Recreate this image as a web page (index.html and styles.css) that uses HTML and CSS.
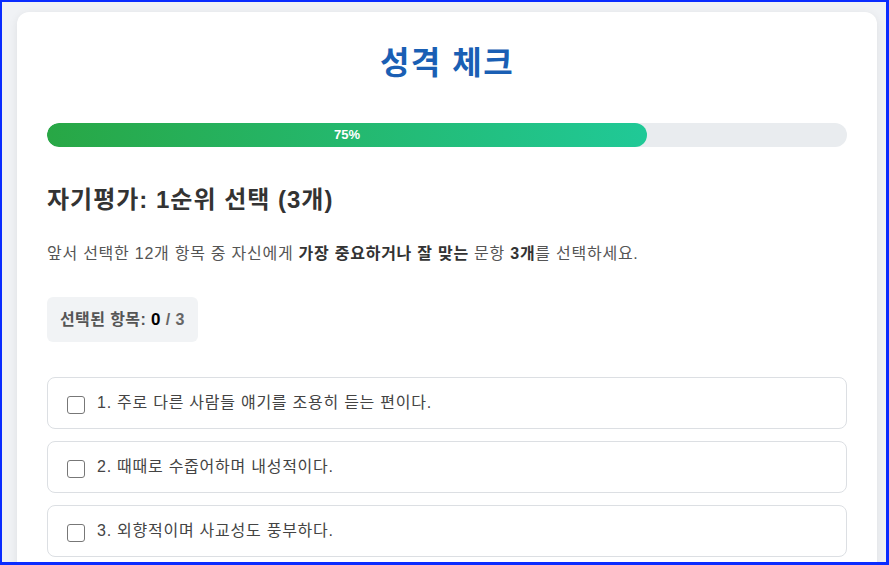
FILE: index.html
```html
<!DOCTYPE html>
<html lang="ko">
<head>
<meta charset="utf-8">
<link rel="stylesheet" href="styles.css">
</head>
<body>
<div class="frame">
  <div class="card">
    <h1 class="title">성격 체크</h1>
    <div class="progress">
      <div class="progress-fill" style="width:75%">75%</div>
    </div>
    <h2 class="heading">자기평가: 1순위 선택 (3개)</h2>
    <p class="desc">앞서 선택한 12개 항목 중 자신에게 <b>가장 중요하거나 잘 맞는</b> 문항 <b>3개</b>를 선택하세요.</p>
    <div class="counter">선택된 항목: <span class="num">0</span> <span class="total">/ 3</span></div>
    <div class="list">
      <label class="item"><span class="box"></span><span class="label">1. 주로 다른 사람들 얘기를 조용히 듣는 편이다.</span></label>
      <label class="item"><span class="box"></span><span class="label">2. 때때로 수줍어하며 내성적이다.</span></label>
      <label class="item"><span class="box"></span><span class="label">3. 외향적이며 사교성도 풍부하다.</span></label>
    </div>
  </div>
</div>
</body>
</html>
```
FILE: styles.css
```css
html, body {
  margin: 0;
  padding: 0;
  height: 100%;
  overflow: hidden;
}
body {
  font-family: "Liberation Sans", Arial, "Noto Sans CJK KR", sans-serif;
  color: #333;
}
.frame {
  box-sizing: border-box;
  height: 565px;
  border-style: solid;
  border-color: #0a2cff;
  border-width: 2px 3px 3px 2px;
  background: #f0f2f5;
  padding: 10px 9px 0 15px;
  overflow: hidden;
}
.card {
  background: #fff;
  border-radius: 12px;
  box-shadow: 0 2px 10px rgba(0,0,0,0.08);
  padding: 26px 30px 30px;
  min-height: 700px;
}
.title {
  margin: 0;
  text-align: center;
  color: #1a5fb4;
  font-size: 32px;
  font-weight: 700;
  line-height: 50px;
  letter-spacing: 1.5px;
}
.progress {
  margin-top: 35px;
  height: 24px;
  border-radius: 12px;
  background: #e9ecef;
  overflow: hidden;
}
.progress-fill {
  height: 100%;
  border-radius: 12px;
  background: linear-gradient(90deg, #28a745, #20c997);
  color: #fff;
  font-size: 13px;
  font-weight: 700;
  line-height: 24px;
  text-align: center;
}
.heading {
  margin: 37px 0 0;
  font-size: 24px;
  font-weight: 700;
  color: #333;
  line-height: 32px;
  letter-spacing: 1px;
}
.desc {
  margin: 25px 0 0;
  font-size: 16px;
  color: #555;
  line-height: 26px;
  letter-spacing: 0.75px;
}
.desc b { color: #333; }
.counter {
  display: inline-block;
  margin-top: 30px;
  background: #f1f3f5;
  border-radius: 6px;
  padding: 0 13px;
  line-height: 45px;
  font-size: 16px;
  font-weight: 700;
  color: #555;
  letter-spacing: 0.4px;
}
.counter .num { color: #000; font-size: 17px; }
.counter .total { color: #666; }
.list {
  margin-top: 35px;
  display: flex;
  flex-direction: column;
  gap: 12px;
}
.item {
  display: flex;
  align-items: center;
  gap: 12px;
  height: 50px;
  padding: 0 19px;
  border: 1px solid #dcdfe3;
  border-radius: 8px;
  font-size: 16px;
  color: #444;
  letter-spacing: 0.75px;
}
.label { margin-bottom: 4px; }
.box {
  width: 16px;
  height: 16px;
  border: 1px solid #777;
  border-radius: 3px;
  flex: none;
  margin-top: 4px;
}
```
